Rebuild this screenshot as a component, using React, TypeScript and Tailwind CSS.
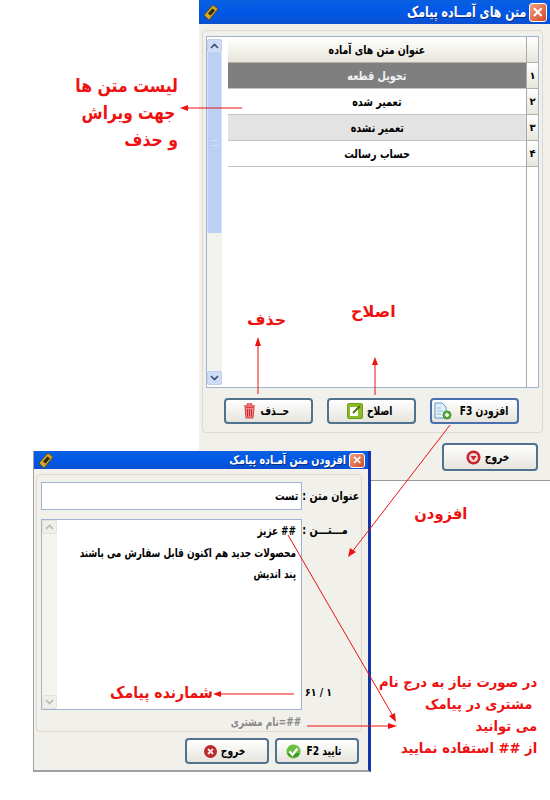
const font = "[font-family:'DejaVu_Sans',sans-serif]";

const rows = [
  { n: "۱", title: "تحویل قطعه", cls: "bg-[#7f7f7f] text-[#f2f2f2]" },
  { n: "۲", title: "تعمیر شده", cls: "bg-white text-black" },
  { n: "۳", title: "تعمیر نشده", cls: "bg-[#e3e3e3] text-black" },
  { n: "۴", title: "حساب رسالت", cls: "bg-white text-black" },
];

function AppIcon() {
  return (
    <svg width="16" height="17" viewBox="0 0 16 17">
      <path d="M1 11 L10 1 L15 5 L6 16 Z" fill="#d0a52a" stroke="#6a5510" />
      <path d="M5 9.500 L9.500 4.500 L12 6.500 L7.500 11.500 Z" fill="#2d2a12" />
    </svg>
  );
}

function CloseBox({ size }: { size: string }) {
  return (
    <div className={`${size} flex items-center justify-center rounded-[3px] border border-white bg-gradient-to-br from-[#eea184] to-[#d2441c]`}>
      <svg className="w-3/5 h-3/5" viewBox="0 0 10 10">
        <path d="M1 1 L9 9 M9 1 L1 9" stroke="white" strokeWidth="2.200" />
      </svg>
    </div>
  );
}

function TitleBar({ title, height, text, box, scale }: { title: string; height: string; text: string; box: string; scale: string }) {
  return (
    <div className={`${height} flex items-center justify-between pl-1 pr-[3px] bg-gradient-to-b from-[#0a5fe0] via-[#0058e8] to-[#0a4fd0] shrink-0`}>
      <AppIcon />
      <div className="flex items-center gap-[3px]">
        <span dir="rtl" className={`${text} ${scale} inline-block origin-right whitespace-nowrap font-bold text-white [text-shadow:1px_1px_0_#0b2c80]`}>{title}</span>
        <CloseBox size={box} />
      </div>
    </div>
  );
}

function Btn({ label, w, h, active, children }: { label: string; w: string; h: string; active?: boolean; children?: React.ReactNode }) {
  return (
    <div className={`${w} ${h} flex items-center justify-center rounded-[4px] border-2 ${active ? "border-[#4a6fae]" : "border-[#51728f]"} bg-gradient-to-b from-white to-[#e6e4dc] text-[12px] font-bold text-black`}>
      {children}
      <span dir="rtl" className="inline-block scale-x-[0.76] whitespace-nowrap">{label}</span>
    </div>
  );
}

function TrashIcon() {
  return (
    <svg width="13" height="16" viewBox="0 0 13 16">
      <path d="M1 3 H12 M4.500 3 V1 H8.500 V3" stroke="#e05050" strokeWidth="1.400" fill="none" />
      <path d="M2 4.500 H11 L10 15 H3 Z" fill="#f08a8a" stroke="#d84040" />
      <path d="M4.500 6 V13.500 M6.500 6 V13.500 M8.500 6 V13.500" stroke="#c83030" />
    </svg>
  );
}

function EditIcon() {
  return (
    <svg width="16" height="16" viewBox="0 0 16 16">
      <rect x="0.500" y="0.500" width="15" height="15" rx="1.500" fill="#8cbc28" stroke="#6f9a1c" />
      <rect x="3" y="4" width="8" height="9" fill="white" />
      <path d="M6 10 L13 3" stroke="#4e7410" strokeWidth="2" />
    </svg>
  );
}

function AddDocIcon() {
  return (
    <svg width="19" height="18" viewBox="0 0 19 18">
      <path d="M2 1 H9 L13 5 V16 H2 Z" fill="#e4f0fa" stroke="#5a9ac8" />
      <path d="M4 6 H8 M4 9 H10 M4 12 H8" stroke="#8fbcdc" />
      <circle cx="14" cy="13" r="4" fill="#5cb040" stroke="#3d8a28" />
      <path d="M12 13 H16 M14 11 V15" stroke="white" strokeWidth="1.400" />
    </svg>
  );
}

function ExitIcon() {
  return (
    <svg width="15" height="15" viewBox="0 0 15 15">
      <circle cx="7.500" cy="7.500" r="7" fill="#c8242c" />
      <circle cx="7.500" cy="7.500" r="4.500" fill="#f4d8d8" />
      <path d="M4.500 6 L7.500 10.500 L10.500 6 Z" fill="#c8242c" />
    </svg>
  );
}

function OkIcon() {
  return (
    <svg width="15" height="15" viewBox="0 0 15 15">
      <circle cx="7.500" cy="7.500" r="7" fill="#6cc040" />
      <path d="M1 9 A7 7 0 0 0 14 9 Z" fill="#3c9a28" />
      <path d="M3.500 7.500 L6.500 11 L11.500 4.500" stroke="white" strokeWidth="2.200" fill="none" />
    </svg>
  );
}

function CancelIcon() {
  return (
    <svg width="13" height="13" viewBox="0 0 13 13">
      <circle cx="6.500" cy="6.500" r="6.500" fill="#b8282c" />
      <path d="M4 4 L9 9 M9 4 L4 9" stroke="#f6e2e2" strokeWidth="2" />
    </svg>
  );
}

function ScrollArrow({ up, faded }: { up?: boolean; faded?: boolean }) {
  return (
    <div className={`h-[14px] flex items-center justify-center rounded-[2px] border ${faded ? "border-[#e4e2da] bg-[#efeee8]" : "border-[#c0d0ec] bg-[#cfdcf6]"}`}>
      <svg width="9" height="6" viewBox="0 0 9 6">
        <path d={up ? "M1 5 L4.500 1.500 L8 5" : "M1 1 L4.500 4.500 L8 1"} stroke={faded ? "#b8b8b0" : "#3a4a70"} strokeWidth="1.600" fill="none" />
      </svg>
    </div>
  );
}

function ListWindow() {
  return (
    <div className="absolute left-[199px] top-0 w-[351px] h-[481px] flex flex-col bg-[#f1f0ea] border-b border-[#9a9a9a]">
      <TitleBar title="متن های آمــاده پیامک" height="h-[24px]" text="text-[15px]" box="w-[18px] h-[19px]" scale="scale-x-[0.73]" />
      <div className="ml-[3px] mr-[7px] mt-[6px] h-[403px] rounded-[4px] border border-[#dcdad0] pt-[5px] pl-[3px]">
        <div className="w-[333px] h-[352px] flex border border-[#9db4d2] bg-white">
          <div className="w-[21px] shrink-0 pr-[6px] pt-[2px] pb-[2px] flex flex-col">
            <ScrollArrow up />
            <div className="h-[180px] bg-[#bcd0f6] border-x border-[#d8e2f6] flex items-center justify-center">
              <div className="w-[7px] h-[6px] border-y border-[#d8e2f6]" />
            </div>
            <div className="flex-1 bg-[#f3f3ee]" />
            <ScrollArrow />
          </div>
          <div className="w-[299px] shrink-0 border-r border-[#a8a8a8]">
            <div className="h-[26px] flex items-center justify-center bg-gradient-to-b from-white to-[#e8e6da] text-[12px] font-bold text-black border-b border-[#b0b0a8]">
              <span dir="rtl" className="inline-block scale-x-[0.78] whitespace-nowrap">عنوان متن های آماده</span>
            </div>
            {rows.map((r) => (
              <div key={r.n} className={`h-[26px] flex items-center justify-center text-[12px] font-bold border-b border-[#c4c4c4] ${r.cls}`}>
                <span dir="rtl" className="inline-block scale-x-[0.8] whitespace-nowrap">{r.title}</span>
              </div>
            ))}
          </div>
          <div className="w-[11px] shrink-0">
            <div className="h-[26px] bg-gradient-to-b from-white to-[#e8e6da] border-b border-[#b0b0a8]" />
            {rows.map((r) => (
              <div key={r.n} className="h-[26px] flex items-center justify-center bg-gradient-to-b from-white to-[#e8e6da] text-[10px] font-bold text-black border-b border-[#b0b0a8]">
                {r.n}
              </div>
            ))}
          </div>
        </div>
        <div className="flex gap-[14px] pl-[18px] pt-[10px]">
          <Btn label="حــذف" w="w-[89px]" h="h-[26px]"><TrashIcon /></Btn>
          <Btn label="اصلاح" w="w-[89px]" h="h-[26px]"><EditIcon /></Btn>
          <Btn label="افزودن F3" w="w-[89px]" h="h-[26px]" active><AddDocIcon /></Btn>
        </div>
      </div>
      <div className="flex justify-end pr-[12px] pt-[10px]">
        <Btn label="خروج" w="w-[96px]" h="h-[28px]"><ExitIcon /></Btn>
      </div>
    </div>
  );
}

function AddWindow() {
  return (
    <div className="absolute left-[33px] top-[451px] w-[338px] h-[321px] flex flex-col bg-[#f1f0ea] border-r-[3px] border-r-[#1236a8] border-l border-l-[#a0a0a0] border-b-2 border-b-[#a0a0a0]">
      <TitleBar title="افزودن متن آمـاده پیامک" height="h-[18px]" text="text-[12px]" box="w-[16px] h-[15px]" scale="scale-x-[0.8]" />
      <div className="ml-[2px] mr-[6px] mt-[5px] h-[258px] rounded-[4px] border border-[#dcdad0] pl-[4px] pt-[7px] flex flex-col">
        <div className="flex items-center h-[28px]">
          <div dir="rtl" className="w-[261px] h-[28px] shrink-0 border border-[#9db4d2] bg-white flex items-center px-[3px] text-[12px] font-bold text-black">
            <span className="inline-block origin-right scale-x-[0.8]">تست</span>
          </div>
          <div dir="rtl" className="flex-1 min-w-0 pr-[2px] text-[12px] font-bold text-black whitespace-nowrap">
            <span className="inline-block origin-right scale-x-[0.8]">عنوان متن :</span>
          </div>
        </div>
        <div className="flex mt-[9px]">
          <div className="w-[261px] h-[191px] shrink-0 border border-[#9db4d2] bg-white flex">
            <div className="w-[15px] shrink-0 bg-[#f4f3ee] flex flex-col justify-between">
              <ScrollArrow up faded />
              <ScrollArrow faded />
            </div>
            <div dir="rtl" className="flex-1 min-w-0 pr-[5px] pt-[1px] text-[12px] font-bold leading-[21.500px] text-black whitespace-nowrap">
              <div className="origin-right scale-x-[0.74]">## عزیز</div>
              <div className="origin-right scale-x-[0.74]">محصولات جدید هم اکنون قابل سفارش می باشند</div>
              <div className="origin-right scale-x-[0.74]">پند اندیش</div>
            </div>
          </div>
          <div className="flex-1 min-w-0 flex flex-col justify-between pb-[9px] pt-[2px]">
            <div dir="rtl" className="pr-[13px] text-[12px] font-bold text-black whitespace-nowrap">
              <span className="inline-block origin-right scale-x-[0.8]">مـــتـــن :</span>
            </div>
            <div className="text-[11px] font-bold text-black pl-[3px]">
              <span className="inline-block origin-left scale-x-[0.85] whitespace-nowrap">۶۱ / ۱</span>
            </div>
          </div>
        </div>
        <div dir="rtl" className="w-[261px] mt-[3px] pr-[1px] text-[12px] font-bold text-[#8a8a8a] whitespace-nowrap">
          <span className="inline-block origin-right scale-x-[0.74]">##=نام مشتری</span>
        </div>
      </div>
      <div className="flex gap-[6px] pl-[151px] pt-[6px]">
        <Btn label="خروج" w="w-[84px]" h="h-[26px]"><CancelIcon /></Btn>
        <Btn label="تایید F2" w="w-[84px]" h="h-[26px]"><OkIcon /></Btn>
      </div>
    </div>
  );
}

function Arrows() {
  return (
    <svg className="absolute inset-0 pointer-events-none" width="550" height="800" viewBox="0 0 550 800">
      <g stroke="#ee1111" strokeWidth="1" fill="none">
        <path d="M242 108 H186" />
        <path d="M258 394 V344" />
        <path d="M375 395 V362" />
        <path d="M450 425 L352 552" />
        <path d="M288 535 L393 716" />
        <path d="M307 726 H390" />
        <path d="M294 694 H218" />
      </g>
      <g fill="#ee1111">
        <path d="M180 108 L188 105 V111 Z" />
        <path d="M258 337 L255 346 H261 Z" />
        <path d="M375 357 L372 365 H378 Z" />
        <path d="M348 557 L350 548 L356 552 Z" />
        <path d="M396 722 L389 716 L395 713 Z" />
        <path d="M397 726 L388 723 V729 Z" />
        <path d="M213 694 L221 691 V697 Z" />
      </g>
    </svg>
  );
}

function Note({ className, children }: { className: string; children: React.ReactNode }) {
  return (
    <div dir="rtl" className={`absolute font-bold text-[#ee1111] whitespace-nowrap ${className}`}>
      {children}
    </div>
  );
}

export default function App() {
  return (
    <div className={`relative w-[550px] h-[800px] overflow-hidden bg-white ${font}`}>
      <ListWindow />
      <AddWindow />
      <Arrows />
      <Note className="right-[372px] top-[72px] text-[18px] leading-[27px] text-right">
        <div className="origin-right scale-x-[0.87]">لیست متن ها</div>
        <div className="pr-[3px] origin-right scale-x-[0.85]">جهت ویراش</div>
        <div className="origin-right scale-x-[0.87]">و حذف</div>
      </Note>
      <Note className="left-[247px] top-[308px] text-[16px]">حذف</Note>
      <Note className="left-[351px] top-[300px] text-[16px]">اصلاح</Note>
      <Note className="left-[412px] top-[502px] text-[16px] scale-x-[0.92]">افزودن</Note>
      <Note className="left-[103px] top-[681px] text-[16px] scale-x-[0.88]">شمارنده پیامک</Note>
      <Note className="right-[13px] top-[671px] text-[14px] leading-[22px] text-right">
        <div className="origin-right scale-x-[0.94]">در صورت نیاز به درج نام</div>
        <div className="pr-[5px] origin-right scale-x-[0.94]">مشتری در پیامک</div>
        <div className="origin-right scale-x-[0.94]">می توانید</div>
        <div className="origin-right scale-x-[0.94]">از ## استفاده نمایید</div>
      </Note>
    </div>
  );
}
